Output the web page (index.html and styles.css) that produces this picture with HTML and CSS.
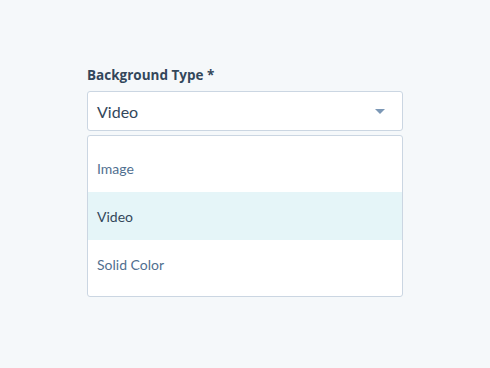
FILE: index.html
```html
<!DOCTYPE html>
<html lang="en">
<head>
  <meta charset="UTF-8"/>
  <title>Background Type</title>
  <link rel="stylesheet" href="styles.css">
</head>
<body>
  <div class="field">
    <label class="field-label">Background Type *</label>

    <!-- Select -->
    <div class="select">
      <span class="select-value">Video</span>
      <span class="caret"></span>
    </div>

    <!-- Open dropdown -->
    <ul class="dropdown">
      <li>Image</li>
      <li class="active">Video</li>
      <li>Solid Color</li>
    </ul>
  </div>
</body>
</html>
```

FILE: styles.css
```css
:root {
  --page-bg: #f5f8fa;
  --text: #33475b;
  --muted: #516f90;
  --border: #cbd6e2;
  --hover: #e5f5f8;
}
* { margin:0; padding:0; box-sizing:border-box }
body {
  font-family:Lato,'Open Sans',sans-serif;
  background:var(--page-bg);
  color:var(--text);
}

.field {
  width:316px;
  margin:66px 0 0 87px;
  display:flex; flex-direction:column;
}
.field-label {
  font-family:'Open Sans',sans-serif;
  font-size:13.5px; font-weight:700; line-height:18px;
  margin-bottom:7px;
}

/* Select */
.select {
  height:40px;
  background:#fff;
  border:1px solid var(--border); border-radius:3px;
  display:flex; align-items:center; justify-content:space-between;
  padding:0 17px 0 9px;
}
.select-value { font-size:16px }
.caret {
  width:0; height:0;
  border-left:5px solid transparent;
  border-right:5px solid transparent;
  border-top:5px solid #7c98b6;
}

/* Dropdown */
.dropdown {
  list-style:none;
  margin-top:4px;
  background:#fff;
  border:1px solid var(--border); border-radius:3px;
  padding:8px 0;
}
.dropdown li {
  height:48px;
  display:flex; align-items:center;
  padding:0 9px;
  font-size:14px; color:var(--muted);
}
.dropdown li.active { background:var(--hover); color:var(--text) }
```
